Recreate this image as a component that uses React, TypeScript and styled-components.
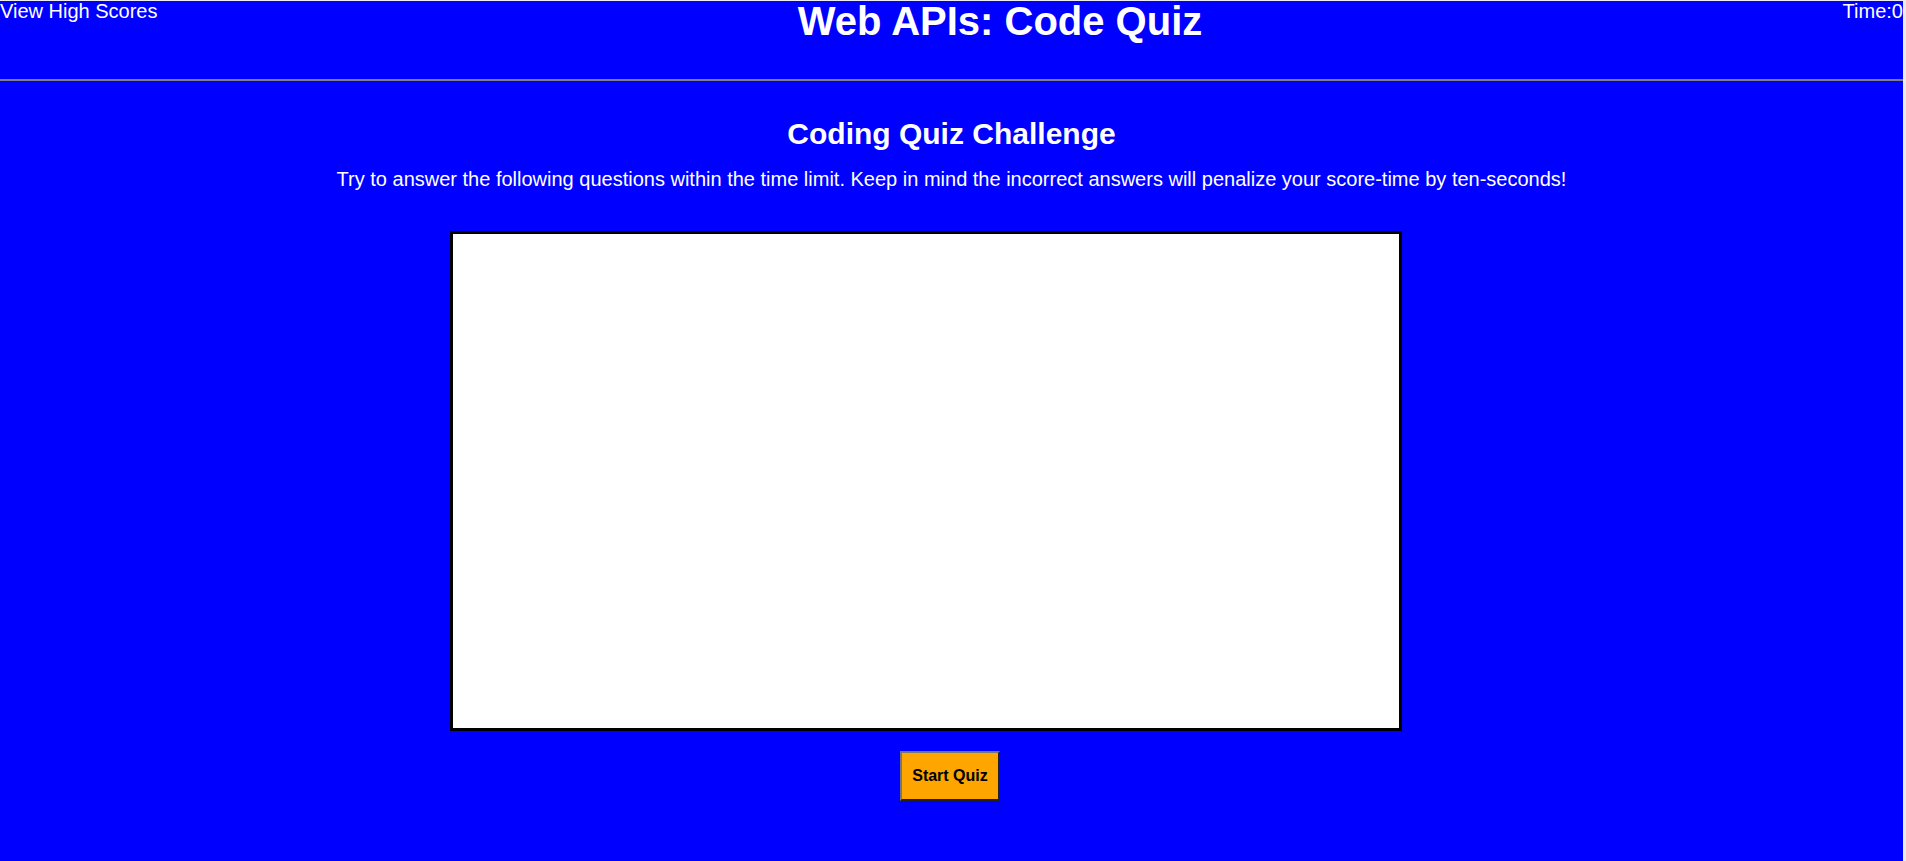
import React from "react";
import styled, { createGlobalStyle } from "styled-components";

const Global = createGlobalStyle`
  html, body {
    margin: 0;
    padding: 0;
    background: #ececec;
  }
  body {
    font-family: "Liberation Sans", Arial, sans-serif;
    padding-top: 1px;
  }
`;

const Page = styled.div`
  width: 1903px;
  min-height: 860px;
  background: #0000ff;
  color: #ffffff;
  display: flex;
  flex-direction: column;
`;

const Header = styled.header`
  height: 78px;
  display: flex;
  justify-content: space-between;
  align-items: flex-start;
  border-bottom: 2px solid #808080;
`;

const NavText = styled.div`
  font-size: 20px;
  line-height: 20px;
`;

const Title = styled.h1`
  margin: 0;
  font-size: 40px;
  line-height: 40px;
  font-weight: bold;
`;

const Main = styled.main`
  display: flex;
  flex-direction: column;
`;

const Heading = styled.h2`
  margin: 36px 0 0;
  font-size: 30px;
  font-weight: bold;
  text-align: center;
`;

const Intro = styled.p`
  margin: 17px 0 0;
  font-size: 20px;
  text-align: center;
`;

const QuizBox = styled.section`
  box-sizing: border-box;
  margin: 40px 0 0 450px;
  width: 952px;
  height: 500px;
  background: #ffffff;
  border: 3px solid #000000;
`;

const StartButton = styled.button`
  box-sizing: border-box;
  align-self: center;
  margin: 20px 3px 0 0;
  width: 100px;
  height: 50px;
  background: #ffa500;
  color: #000000;
  border: 2px outset #767676;
  font-family: "Liberation Sans", Arial, sans-serif;
  font-size: 16px;
  font-weight: bold;
  padding: 0;
`;

export default function App() {
  return (
    <>
      <Global />
      <Page>
        <Header>
          <NavText>View High Scores</NavText>
          <Title>Web APIs: Code Quiz</Title>
          <NavText>Time:0</NavText>
        </Header>
        <Main>
          <Heading>Coding Quiz Challenge</Heading>
          <Intro>
            Try to answer the following questions within the time limit. Keep in mind the incorrect
            answers will penalize your score-time by ten-seconds!
          </Intro>
          <QuizBox />
          <StartButton>Start Quiz</StartButton>
        </Main>
      </Page>
    </>
  );
}
